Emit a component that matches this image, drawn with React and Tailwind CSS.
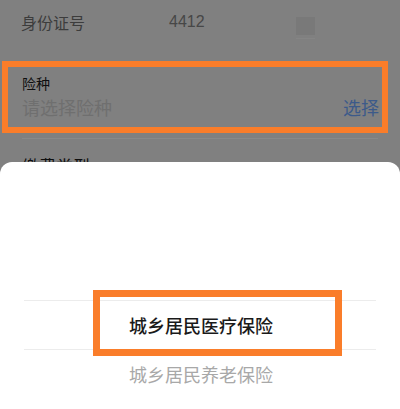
export default function App() {
  const font = { fontFamily: '"Noto Sans CJK SC", "Noto Sans", sans-serif' };
  return (
    <div
      className="relative w-[400px] h-[409px] overflow-hidden bg-[#808080] flex flex-col"
      style={font}
    >
      <div className="h-[44px] flex items-center pl-[21px] shrink-0">
        <span className="w-[148px] text-[16px] leading-[22px] text-[#3c3c3c]">身份证号</span>
        <span
          className="w-[127px] text-[16px] leading-[22px] text-[#474747]"
          style={{ fontFamily: '"Liberation Sans", Arial, sans-serif' }}
        >
          4412
        </span>
        <div className="flex flex-col self-start mt-[17px]">
          <div className="w-[19px] h-[18px] bg-[#797979]" />
          <div className="w-[19px] h-px mt-[3px] bg-[#858585]" />
        </div>
      </div>

      <div className="mt-[17px] ml-[2px] w-[386px] h-[72px] border-[6px] border-[#fa7d2a] flex flex-col pl-[14px] pr-[3px] pt-[7px] shrink-0">
        <span className="text-[14px] leading-[18px] text-[#0e0e0e]">险种</span>
        <div className="mt-[3px] flex items-center justify-between">
          <span className="text-[18px] leading-[24px] text-[#6f6f6f]">请选择险种</span>
          <span className="text-[18px] leading-[24px] text-[#3c5a8a]">选择</span>
        </div>
      </div>

      <div className="mt-[5px] mx-[22px] h-px bg-[#898989] shrink-0" />

      <div className="mt-[15px] pl-[22px] shrink-0">
        <span className="text-[17px] leading-[24px] text-[#0e0e0e]">缴费类型</span>
      </div>

      <div className="absolute left-0 right-0 top-[162px] bottom-0 bg-white rounded-t-[12px]">
        <div className="pt-[138px] mx-[24px] flex flex-col">
          <div className="h-[50px] border-y border-[#ececec] flex items-center pl-[105px]">
            <span className="text-[18px] leading-[24px] text-[#1a1a1a] font-medium">城乡居民医疗保险</span>
          </div>
          <div className="h-[48px] flex items-center pl-[105px]">
            <span className="text-[18px] leading-[24px] text-[#a8a8a8]">城乡居民养老保险</span>
          </div>
        </div>
        <div className="absolute left-[93px] top-[128px] w-[249px] h-[66px] border-[7px] border-[#fa7d2a]" />
      </div>
    </div>
  );
}
